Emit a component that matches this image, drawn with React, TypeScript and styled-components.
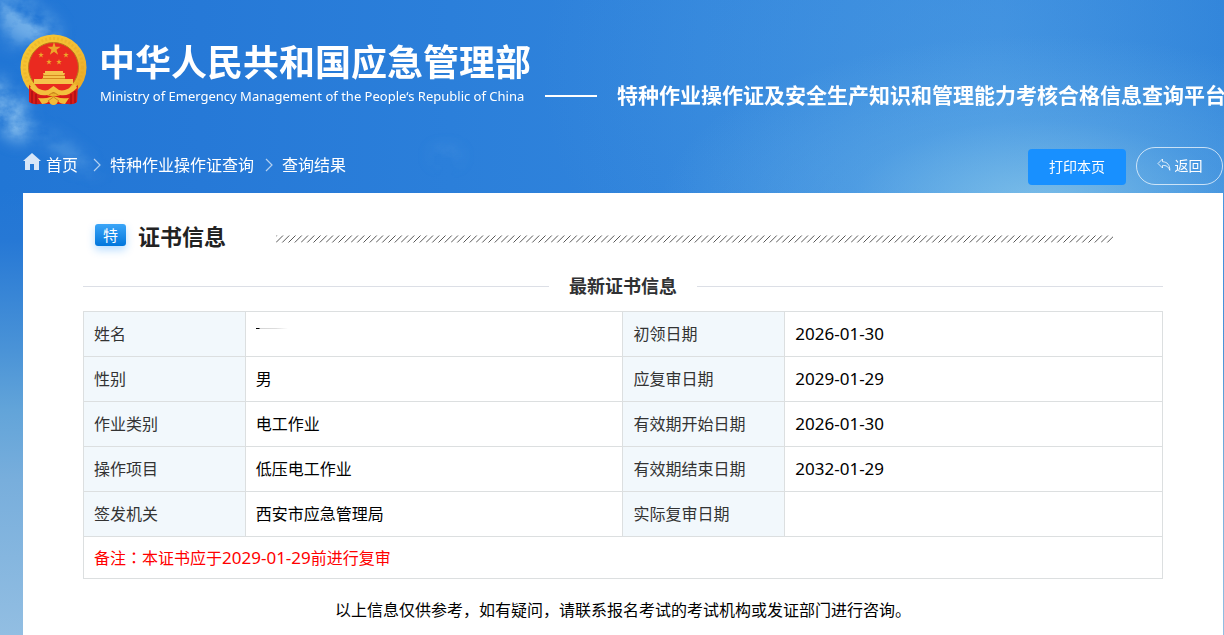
import React from 'react';
import styled, { createGlobalStyle } from 'styled-components';

const GlobalStyle = createGlobalStyle`
  *, *::before, *::after { box-sizing: border-box; }
  html, body { margin: 0; padding: 0; background: #92bee2; }
  body {
    font-family: 'Noto Sans', 'Noto Sans CJK SC', sans-serif;
    font-size: 16px;
    line-height: 24px;
    color: #000;
  }
`;

const Page = styled.div`
  position: relative;
  min-height: 100vh;
  padding: 0 1px 0 23px;
  overflow: hidden;
  background:
    radial-gradient(ellipse 380px 170px at 1040px 205px, rgba(150, 210, 236, 0.7), rgba(120, 190, 235, 0.3) 50%, rgba(100, 175, 230, 0) 100%),
    radial-gradient(ellipse 440px 340px at 980px 70px, rgba(90, 170, 230, 0.35), rgba(90, 170, 230, 0) 100%),
    linear-gradient(180deg, rgba(43, 125, 217, 0) 190px, #2678d5 240px, #4a93d7 350px, #62a4d9 410px, #78aedc 480px, #92bee2 635px),
    linear-gradient(90deg, #2176d5 0, #2679d7 200px, #2b7fda 450px, #3285dc 700px, #3889de 1000px, #2c80d9 1224px);
`;

const CloudArt = styled.svg`
  position: absolute;
  top: 0;
  left: 0;
  pointer-events: none;
`;

const Header = styled.header`
  position: relative;
  display: flex;
  flex-direction: column;
`;

const Brand = styled.div`
  display: flex;
  align-items: flex-start;
  height: 147px;
  margin-left: -3px;
  padding-top: 34px;
  white-space: nowrap;
`;

const Emblem = styled.svg`
  flex: none;
  width: 67px;
  height: 72px;
`;

const BrandNames = styled.div`
  flex: none;
  margin-left: 12px;
  padding-top: 5px;
  color: #fff;
`;

const Ministry = styled.h1`
  margin: 0;
  font-size: 36px;
  line-height: 48px;
  font-weight: 700;
`;

const MinistryEnglish = styled.p`
  margin: 0;
  padding-left: 1px;
  font-size: 13px;
  line-height: 18px;
  font-weight: 400;
`;

const Dash = styled.span`
  flex: none;
  width: 52px;
  height: 2px;
  margin: 61px 20px 0 14px;
  background: #fff;
`;

const Platform = styled.h2`
  flex: none;
  margin: 0;
  padding-top: 45px;
  font-size: 21px;
  line-height: 32px;
  font-weight: 700;
  color: #fff;
`;

const NavBar = styled.div`
  display: flex;
  align-items: flex-start;
  justify-content: space-between;
  height: 46px;
`;

const Crumbs = styled.nav`
  display: flex;
  align-items: center;
  height: 36px;
`;

const Crumb = styled.a`
  color: #fff;
  text-decoration: none;
`;

const HomeIcon = styled.svg`
  width: 18px;
  height: 18px;
  margin: 0 5px 6px 0;
`;

const Chevron = styled.svg<{ $lead: number }>`
  width: 8px;
  height: 14px;
  margin: 0 9px 0 ${p => p.$lead}px;
`;

const Actions = styled.div`
  display: flex;
  align-items: flex-end;
  gap: 10px;
`;

const PrintButton = styled.button`
  width: 98px;
  height: 36px;
  padding: 0;
  border: 0;
  border-radius: 4px;
  background: #1890ff;
  color: #fff;
  font: inherit;
  font-size: 14px;
`;

const BackButton = styled.button`
  display: flex;
  align-items: center;
  justify-content: center;
  gap: 4px;
  width: 87px;
  height: 38px;
  padding: 0;
  border: 1px solid rgba(255, 255, 255, 0.7);
  border-radius: 19px;
  background: transparent;
  color: #fff;
  font: inherit;
  font-size: 14px;
`;

const Panel = styled.main`
  position: relative;
  min-height: calc(100vh - 193px);
  padding: 28px 60px 0;
  background: #fff;
`;

const SectionHead = styled.div`
  display: flex;
  align-items: center;
  height: 30px;
  padding: 0 50px 0 12px;
`;

const Tag = styled.span`
  width: 31px;
  height: 22px;
  margin-bottom: 2px;
  border-radius: 3px;
  background: linear-gradient(180deg, #3aa5f8, #0276dc);
  box-shadow: 0 4px 8px rgba(24, 144, 255, 0.3);
  color: #fff;
  font-size: 15px;
  line-height: 22px;
  text-align: center;
`;

const SectionTitle = styled.h2`
  margin: 0 50px 0 12px;
  font-size: 22px;
  line-height: 30px;
  font-weight: 700;
  color: #222;
`;

const Hatching = styled.svg`
  flex: 1;
  height: 8px;
  margin-top: 6px;
`;

const Divider = styled.h3`
  display: flex;
  align-items: center;
  gap: 20px;
  margin: 22px 0 11px;
  font-size: 18px;
  line-height: 27px;
  font-weight: 700;
  color: #303133;

  &::before, &::after {
    content: '';
    flex: 1;
    height: 1px;
    background: #dcdfe6;
  }
`;

const InfoTable = styled.table`
  width: 100%;
  border-collapse: collapse;
  table-layout: fixed;
`;

const Label = styled.th`
  width: 15%;
  height: 45px;
  padding: 0 10px;
  border: 1px solid #dcdfe0;
  background: #f2f8fc;
  color: #333;
  font-weight: 400;
  text-align: left;
`;

const Value = styled.td<{ $date?: boolean }>`
  width: 35%;
  padding: 0 10px;
  border: 1px solid #dcdfe0;
  font-size: ${p => (p.$date ? 17 : 16)}px;
`;

const NoteCell = styled.td`
  height: 42px;
  padding: 0 10px;
  border: 1px solid #dcdfe0;
  color: #f00;
`;

const NoteDate = styled.span`
  font-size: 17px;
`;

const Colon = styled.span`
  font-family: 'Noto Sans CJK TC', sans-serif;
`;

const NameTrace = styled.span`
  display: block;
  width: 32px;
  height: 1px;
  margin-bottom: 11px;
  background: linear-gradient(90deg, #000 3px, #d5d5d5 4px, #ddd 20px, #fff);
`;

const Footnote = styled.p`
  margin: 0;
  padding: 19px 0;
  text-align: center;
`;

type Row = { label: string; value: React.ReactNode; dateLabel: string; date: string };

const rows: Row[] = [
  { label: '姓名', value: <NameTrace />, dateLabel: '初领日期', date: '2026-01-30' },
  { label: '性别', value: '男', dateLabel: '应复审日期', date: '2029-01-29' },
  { label: '作业类别', value: '电工作业', dateLabel: '有效期开始日期', date: '2026-01-30' },
  { label: '操作项目', value: '低压电工作业', dateLabel: '有效期结束日期', date: '2032-01-29' },
  { label: '签发机关', value: '西安市应急管理局', dateLabel: '实际复审日期', date: '' },
];

const STAR = 'M0-1 .225-.309 .951-.309 .363.118 .588.809 0 .382-.588.809-.363.118-.951-.309-.225-.309Z';

const stars = [
  { x: 34, y: 15, s: 7 },
  { x: 21, y: 21, s: 3 },
  { x: 46, y: 21, s: 3 },
  { x: 29, y: 28, s: 3 },
  { x: 39, y: 28, s: 3 },
];

function NationalEmblem() {
  return (
    <Emblem viewBox="0 0 67 72" aria-hidden="true">
      <defs>
        <linearGradient id="gold" x1="0" y1="0" x2="1" y2="1">
          <stop offset="0" stopColor="#f8c92f" />
          <stop offset=".5" stopColor="#f3bd35" />
          <stop offset="1" stopColor="#e7a421" />
        </linearGradient>
      </defs>
      <circle cx="33.500" cy="33.500" r="33" fill="url(#gold)" />
      <circle cx="33.500" cy="33.500" r="29" fill="none" stroke="#dca11f" strokeWidth="3" strokeDasharray="2 2" opacity=".3" />
      <circle cx="33.500" cy="33.500" r="25" fill="#ea2a20" stroke="#b8791a" strokeWidth="1" />
      {stars.map(st => (
        <path key={`${st.x}-${st.y}`} d={STAR} transform={`translate(${st.x} ${st.y}) scale(${st.s})`} fill="#eda62a" />
      ))}
      <path d="M25 37h18v2h2l-1 3h1v3h8v5H14v-5h9v-3h1l-1-3h2Z" fill="#f5c34b" />
      <path d="M23 41.500h21M22 44.500h23" stroke="#d58a1d" strokeWidth="1" />
      <path d="M9 51q8 8 24.500 12Q50 59 58 51l-1 17q-3 3-9 2H19q-6 1-10-2Z" fill="#d91c18" />
      <path d="M15 50h37l-4 6-9 3-5.500-3-5.500 3-9-3Z" fill="#e9291f" />
      <path d="M12 50q9 8 16 6l5.500-4 5.500 4q7 2 16-6l2 4q-9 9-17 7l-6.500-3-6.500 3q-8 2-17-7Z" fill="#f3c03d" />
      <path d="M12 57v12M16 60v10M55 57v12M51 60v10" stroke="#ab1013" strokeWidth="1.500" />
      <path d="M18 64q8 1 12-1h7q4 2 12 1l-4 6q-5 0-7-3-1 4-4.500 4T29 67q-2 3-7 3Z" fill="#f2bc39" />
      <path d="M29 61q4.500-4 9 0M28 67l5.500-4 5.500 4" fill="none" stroke="#cb861c" strokeWidth="1" />
    </Emblem>
  );
}

function Clouds() {
  return (
    <CloudArt width="520" height="193" viewBox="0 0 520 193" aria-hidden="true">
      <defs>
        <filter id="wisp" filterUnits="userSpaceOnUse" x="-60" y="-60" width="600" height="270">
          <feGaussianBlur in="SourceGraphic" stdDeviation="8" result="soft" />
          <feTurbulence type="fractalNoise" baseFrequency=".035 .045" numOctaves="5" seed="3" result="noise" />
          <feColorMatrix in="noise" type="matrix" values="0 0 0 0 1  0 0 0 0 1  0 0 0 0 1  2 0 0 0 -0.400" result="mask" />
          <feComposite in="soft" in2="mask" operator="in" />
        </filter>
      </defs>
      <g fill="#8fc3f0" filter="url(#wisp)">
        <ellipse cx="24" cy="20" rx="40" ry="17" transform="rotate(28 24 20)" opacity=".7" />
        <ellipse cx="24" cy="38" rx="24" ry="8" opacity=".4" />
        <ellipse cx="8" cy="110" rx="17" ry="34" transform="rotate(-30 8 110)" opacity=".9" />
        <ellipse cx="64" cy="150" rx="42" ry="7" transform="rotate(35 64 150)" opacity=".4" />
        <ellipse cx="446" cy="156" rx="14" ry="7" opacity=".25" />
      </g>
    </CloudArt>
  );
}

function Separator({ lead }: { lead: number }) {
  return (
    <Chevron $lead={lead} viewBox="0 0 8 14" aria-hidden="true">
      <path d="m1 1 6 6-6 6" fill="none" stroke="#fff" strokeOpacity=".65" strokeWidth="1.200" />
    </Chevron>
  );
}

export default function App() {
  return (
    <Page lang="zh-CN">
      <GlobalStyle />
      <Clouds />
      <Header>
        <Brand>
          <NationalEmblem />
          <BrandNames>
            <Ministry>中华人民共和国应急管理部</Ministry>
            <MinistryEnglish lang="en">Ministry of Emergency Management of the People‘s Republic of China</MinistryEnglish>
          </BrandNames>
          <Dash />
          <Platform>特种作业操作证及安全生产知识和管理能力考核合格信息查询平台</Platform>
        </Brand>
        <NavBar>
          <Crumbs aria-label="breadcrumb">
            <HomeIcon viewBox="0 0 18 18" aria-hidden="true">
              <path d="M9 0 18 8H16V17H11V11H7V17H2V8H0Z" fill="#d7e6f8" />
            </HomeIcon>
            <Crumb href="#home">首页</Crumb>
            <Separator lead={15} />
            <Crumb href="#query">特种作业操作证查询</Crumb>
            <Separator lead={11} />
            <Crumb href="#result">查询结果</Crumb>
          </Crumbs>
          <Actions>
            <PrintButton type="button">打印本页</PrintButton>
            <BackButton type="button">
              <svg width="14" height="16" viewBox="0 0 14 16" aria-hidden="true">
                <path d="M5.500 1 1 5.500l4.500 4.500V7.500c3.500-.3 6 1 7.300 4.800C12.800 7 10.500 4 5.500 3.700Z" fill="none" stroke="#fff" strokeOpacity=".8" />
              </svg>
              返回
            </BackButton>
          </Actions>
        </NavBar>
      </Header>
      <Panel>
        <SectionHead>
          <Tag>特</Tag>
          <SectionTitle>证书信息</SectionTitle>
          <Hatching aria-hidden="true">
            <defs>
              <pattern id="hatch" width="25" height="8" patternUnits="userSpaceOnUse">
                <path d="M0 7.500 7 .5M6.250 7.500l7-7M12.500 7.500l7-7M18.750 7.500l7-7M-6.250 7.500l7-7" stroke="#444" strokeWidth=".9" />
              </pattern>
            </defs>
            <rect width="100%" height="8" fill="url(#hatch)" />
          </Hatching>
        </SectionHead>
        <Divider>最新证书信息</Divider>
        <InfoTable>
          <tbody>
            {rows.map(row => (
              <tr key={row.label}>
                <Label scope="row">{row.label}</Label>
                <Value>{row.value}</Value>
                <Label scope="row">{row.dateLabel}</Label>
                <Value $date>{row.date}</Value>
              </tr>
            ))}
            <tr>
              <NoteCell colSpan={4}>
                备注<Colon lang="zh-TW">：</Colon>本证书应于<NoteDate>2029-01-29</NoteDate>前进行复审
              </NoteCell>
            </tr>
          </tbody>
        </InfoTable>
        <Footnote>以上信息仅供参考，如有疑问，请联系报名考试的考试机构或发证部门进行咨询。</Footnote>
      </Panel>
    </Page>
  );
}
